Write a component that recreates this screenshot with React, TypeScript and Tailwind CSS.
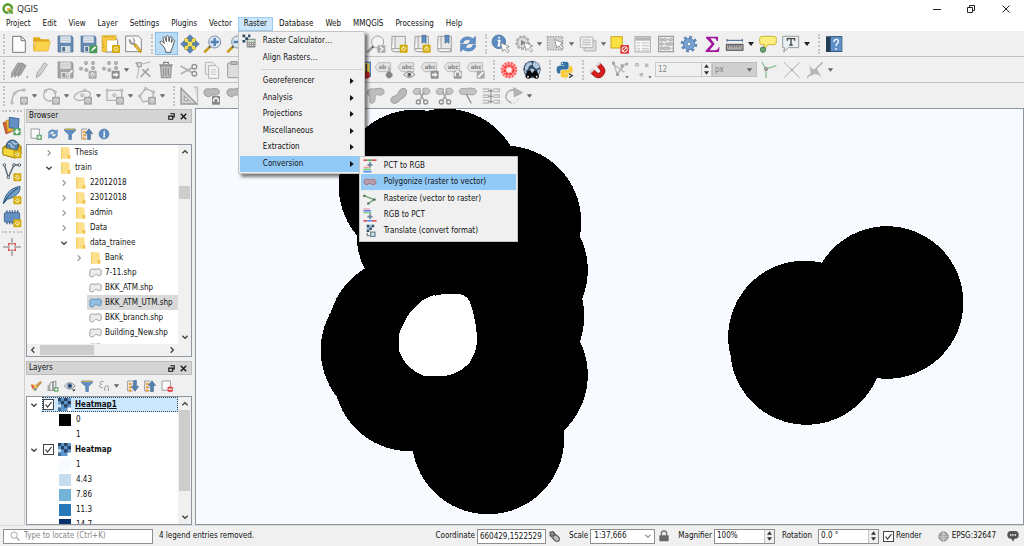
import React from "react";

type Kids = { children?: React.ReactNode };

const Pic = ({ children, size = "size-5" }: Kids & { size?: string }) => (
  <svg viewBox="0 0 60 60" className={`${size} shrink-0`} aria-hidden="true">
    {children}
  </svg>
);

/* ---------- shared badges ---------- */
const Star = ({ x = 32, y = 32, grey = false }: { x?: number; y?: number; grey?: boolean }) => (
  <g transform={`translate(${x} ${y})`}>
    <rect width="24" height="24" rx="3" fill={grey ? "#a9a9a9" : "#d0a90c"} />
    <path d="M12 4v16M4 12h16M6.5 6.5l11 11M17.5 6.5l-11 11" stroke={grey ? "#f2f2f2" : "#fff6bd"} strokeWidth="3" />
    <circle cx="12" cy="12" r="3" fill={grey ? "#a9a9a9" : "#d0a90c"} />
  </g>
);
const ArrowBadge = ({ x = 32, y = 32 }: { x?: number; y?: number }) => (
  <g transform={`translate(${x} ${y})`}>
    <rect width="24" height="24" rx="3" fill="#8f8f8f" />
    <path d="M4 9h8V4l9 8-9 8v-5H4z" fill="#f5f5f5" />
  </g>
);
const Cursor = ({ x = 30, y = 24 }: { x?: number; y?: number }) => (
  <path transform={`translate(${x} ${y})`} d="M0 0l6 26 6-7 9 11 5-4-9-11 9-3z" fill="#fff" stroke="#888" strokeWidth="2.5" />
);

/* ---------- file icons ---------- */
const NewFile = () => (
  <Pic><path d="M11 7h26l12 12v36H11z" fill="#fdfdfd" stroke="#777" strokeWidth="3" /><path d="M36 8v12h12" fill="#e8e8e8" stroke="#777" strokeWidth="3" /></Pic>
);
const OpenFile = () => (
  <Pic><path d="M4 10h18l5 6h24v8H4z" fill="#e0a91a" /><path d="M4 10v38h6" fill="#e0a91a" /><path d="M12 22h43l-7 29H5z" fill="#fbd24c" stroke="#e3b02b" strokeWidth="2" /></Pic>
);
const Floppy = ({ grey = false }: { grey?: boolean }) => (
  <>
    <path d="M9 6h41l4 4v44H9z" fill={grey ? "#a6a6a6" : "#6689b3"} stroke={grey ? "#8a8a8a" : "#4c6c94"} strokeWidth="2" />
    <rect x="16" y="7" width="31" height="19" fill={grey ? "#e2e2e2" : "#e6ecf2"} />
    <path d="M19 13h25M19 19h25" stroke={grey ? "#bbb" : "#a8b6c6"} strokeWidth="2" />
    <rect x="18" y="36" width="28" height="18" fill={grey ? "#dedede" : "#d5dbe2"} />
    <rect x="22" y="39" width="8" height="13" fill={grey ? "#999" : "#52708f"} />
  </>
);
const Save = () => <Pic><Floppy /></Pic>;
const SaveAs = () => (
  <Pic><Floppy /><rect x="34" y="34" width="24" height="24" rx="3" fill="#4c9a57" /><path d="M39 53l3-8 9-8 3 4-9 8z" fill="#fff" /></Pic>
);
const NewLayout = () => (
  <Pic>
    <path d="M12 8h28l10 10v36H12z" fill="#fff" stroke="#888" strokeWidth="3" />
    <path d="M3 5h42v13H17v35H3z" fill="#f7cb45" stroke="#d2a320" strokeWidth="2" />
    <path d="M12 6v6M20 6v6M28 6v6M36 6v6M4 24h6M4 32h6M4 40h6" stroke="#b98b10" strokeWidth="2" />
    <Star x={33} y={33} />
  </Pic>
);
const LayoutManager = () => (
  <Pic>
    <path d="M5 6h38l9 9v38H5z" fill="#fafafa" stroke="#888" strokeWidth="3" />
    <path d="M18 16a10 10 0 0 0 12 13l8 8" fill="none" stroke="#9a9a9a" strokeWidth="7" />
    <path d="M26 12a9 9 0 0 1 4 13" fill="none" stroke="#9a9a9a" strokeWidth="4" />
    <path d="M34 34l15 18" stroke="#c59c17" strokeWidth="9" strokeLinecap="round" /><path d="M35 35l13 16" stroke="#f4da73" strokeWidth="3" />
  </Pic>
);

/* ---------- navigation icons ---------- */
const Hand = () => (
  <Pic><path d="M21 39L10 27c-3-4 2-7 5-5l7 6-4-15c-1-5 5-6 6-2l4 12V8c0-4 6-4 7 0l1 15 3-13c1-4 6-3 6 1l-2 15 3-7c2-4 7-2 6 2l-5 18-5 10v6H26v-6z" fill="#fff" stroke="#444" strokeWidth="2.5" strokeLinejoin="round" /></Pic>
);
const FourArrows = () => (
  <>
    <rect x="14" y="14" width="32" height="32" fill="#f6e052" stroke="#c7a71a" strokeWidth="2" />
    <path d="M30 2l10 11h-6v9h-8v-9h-6zM30 58l10-11h-6v-9h-8v9h-6zM2 30l11-10v6h9v8h-9v6zM58 30L47 20v6h-9v8h9v6z" fill="#5d87b8" stroke="#3f6590" strokeWidth="2" />
  </>
);
const ZoomFull = () => <Pic><FourArrows /></Pic>;
const Lens = ({ plus = true, grey = false }: { plus?: boolean; grey?: boolean }) => (
  <>
    <path d="M22 37L6 53" stroke={grey ? "#a0a0a0" : "#c69c1e"} strokeWidth="8" strokeLinecap="round" />
    <path d="M24 35l-6 6" stroke="#555" strokeWidth="5" />
    <circle cx="35" cy="24" r="18" fill={grey ? "#f4f4f4" : "#dbe7f2"} stroke={grey ? "#a5a5a5" : "#7b8da1"} strokeWidth="3" />
    {!grey && <path d={plus ? "M35 12v24M23 24h24" : "M23 24h24"} stroke="#4f7eb1" strokeWidth="7" />}
  </>
);
const ZoomIn = () => <Pic><Lens /></Pic>;
const ZoomOut = () => <Pic><Lens plus={false} /></Pic>;
const ZoomNext = () => <Pic><Lens grey /><rect x="34" y="34" width="24" height="22" fill="#a9a9a9" /><path d="M42 38l9 7-9 7" fill="none" stroke="#fff" strokeWidth="4" /></Pic>;
const MapSheet = () => (
  <>
    <path d="M9 7h40v46H18c-8 0-10-2-10-8z" fill="#e9e9e9" stroke="#a0a0a0" strokeWidth="3" />
    <path d="M18 8v36H8M18 44h28v9H16" fill="#f7f7f7" stroke="#a0a0a0" strokeWidth="3" />
  </>
);
const NewMapView = () => <Pic><MapSheet /><Star /></Pic>;
const NewBookmark = () => <Pic><MapSheet /><path d="M30 4h12v24l-6-5-6 5z" fill="#5f8cc0" stroke="#3e668f" strokeWidth="2" /><Star /></Pic>;
const Bookmarks = () => <Pic><MapSheet /><path d="M30 4h12v24l-6-5-6 5z" fill="#5f8cc0" stroke="#3e668f" strokeWidth="2" /></Pic>;
const Refresh = ({ size }: { size?: string }) => (
  <Pic size={size}>
    <path d="M7 27C7 9 32 3 45 15l7-8v22H30l8-8C29 13 17 17 15 27z" fill="#5e91c9" stroke="#4777ab" strokeWidth="2" />
    <path d="M53 33C53 51 28 57 15 45l-7 8V31h22l-8 8c9 8 21 4 23-6z" fill="#5e91c9" stroke="#4777ab" strokeWidth="2" />
  </Pic>
);

/* ---------- attribute icons ---------- */
const Info = ({ size, cursor = true }: { size?: string; cursor?: boolean }) => (
  <Pic size={size}>
    <g transform={cursor ? "translate(-3 -3) scale(.88)" : "translate(-2 -2) scale(1.07)"}>
      <circle cx="30" cy="30" r="23" fill="#5b8bc0" stroke="#44719f" strokeWidth="3" />
      <path d="M31 13v6M26 26h7l-4 17h6" stroke="#fff" strokeWidth="6" fill="none" />
    </g>
    {cursor && <Cursor x={29} y={26} />}
  </Pic>
);
const Action = () => (
  <Pic>
    <circle cx="26" cy="26" r="18" fill="#e5e5e5" stroke="#b2b2b2" strokeWidth="8" strokeDasharray="8 4" />
    <circle cx="26" cy="26" r="16" fill="#ddd" stroke="#a5a5a5" strokeWidth="3" /><path d="M21 17l14 9-14 9z" fill="#888" /><Cursor />
  </Pic>
);
const SelectRect = () => (
  <Pic><rect x="4" y="8" width="46" height="40" fill="#d0d0d0" stroke="#888" strokeWidth="3" strokeDasharray="4 4" /><Cursor x={26} y={16} /></Pic>
);
const SelectForm = () => (
  <Pic><rect x="18" y="19" width="36" height="32" rx="3" fill="#ddd" stroke="#b0b0b0" strokeWidth="3" /><rect x="7" y="9" width="38" height="32" rx="3" fill="#f0f0f0" stroke="#b0b0b0" strokeWidth="3" /><path d="M13 18h25M13 25h25M13 32h25" stroke="#b5b5b5" strokeWidth="3" /></Pic>
);
const Deselect = () => (
  <Pic><rect x="3" y="8" width="34" height="34" fill="#fbe241" stroke="#c8a71f" strokeWidth="3" /><rect x="31" y="33" width="26" height="26" rx="3" fill="#de3c3c" /><circle cx="44" cy="46" r="8" fill="none" stroke="#fff" strokeWidth="3" /><path d="M38 52l12-12" stroke="#fff" strokeWidth="3" /></Pic>
);
const TableIcon = () => (
  <Pic><rect x="6" y="8" width="46" height="46" fill="#fafafa" stroke="#aaa" strokeWidth="3" /><path d="M7 15h44" stroke="#b4b4b4" strokeWidth="10" /><path d="M11 27h10M26 27h22M11 35h10M26 35h22M11 43h10M26 43h22M11 49h10M26 49h22" stroke="#c0c0c0" strokeWidth="3" /></Pic>
);
const Abacus = () => (
  <Pic><path d="M8 5v50M52 5v50M5 53h50M8 7h44" stroke="#a0a0a0" strokeWidth="4" /><path d="M8 17h44M8 30h44M8 43h44" stroke="#a8a8a8" strokeWidth="2" /><g fill="#ccc" stroke="#9a9a9a" strokeWidth="2"><circle cx="17" cy="17" r="4.5" /><circle cx="27" cy="17" r="4.5" /><circle cx="43" cy="17" r="4.5" /><circle cx="17" cy="30" r="4.5" /><circle cx="34" cy="30" r="4.5" /><circle cx="44" cy="30" r="4.5" /><circle cx="17" cy="43" r="4.5" /><circle cx="27" cy="43" r="4.5" /><circle cx="37" cy="43" r="4.5" /></g></Pic>
);
const Gear = () => (
  <Pic><circle cx="30" cy="30" r="20" fill="none" stroke="#5f8bbd" strokeWidth="10" strokeDasharray="8 7.7" /><circle cx="30" cy="30" r="17" fill="#79a3d2" stroke="#5682b4" strokeWidth="3" /><circle cx="30" cy="30" r="6" fill="#f2f2f2" stroke="#5682b4" strokeWidth="3" /></Pic>
);
const Sigma = () => (
  <Pic><path d="M12 8h36v13h-4c-1-6-3-8-9-8H25l13 17-15 19h16c6 0 9-3 11-9h3l-3 14H11v-4l18-20L12 12z" fill="#a3119f" /></Pic>
);
const Measure = () => (
  <Pic><path d="M6 19h46M6 15v8M52 15v8" stroke="#3c628f" strokeWidth="3" /><rect x="4" y="31" width="50" height="18" fill="#aaa" stroke="#555" strokeWidth="3" /><path d="M11 32v8M18 32v6M25 32v8M32 32v6M39 32v8M46 32v6" stroke="#444" strokeWidth="2" /></Pic>
);
const MapTip = () => (
  <Pic><path d="M12 7h36q7 0 7 7v11q0 7-7 7H30L19 47V32h-7q-7 0-7-7V14q0-7 7-7z" fill="#fbee7d" stroke="#cdb43a" strokeWidth="3" /><circle cx="15" cy="47" r="8" fill="#68a874" stroke="#447a4e" strokeWidth="3" /></Pic>
);
const Annotation = () => (
  <Pic><path d="M5 7h48v34H22L8 54l3-13H5z" fill="#e9f1f5" stroke="#9a9a9a" strokeWidth="3" /><path d="M19 20v-6h22v6M30 14v19M25 33h10" fill="none" stroke="#444" strokeWidth="4" /></Pic>
);
const Help = () => (
  <Pic><rect x="6" y="7" width="48" height="47" fill="#223f5a" /><rect x="19" y="8" width="35" height="45" fill="#5f90c8" stroke="#36506c" strokeWidth="2" /><path d="M30 24c0-11 14-9 13-1-1 6-7 6-7 13M36 42v5" fill="none" stroke="#fff" strokeWidth="4" /></Pic>
);

/* ---------- editing icons ---------- */
const Pencils = () => (
  <Pic><g fill="#a8a8a8" stroke="#7d7d7d" strokeWidth="2"><path d="M7 52l2-15L27 8l9 5-18 29z" /><path d="M17 52l2-15L36 8l9 5-18 29z" /><path d="M27 50l2-13L43 12l8 5-15 26z" /></g><circle cx="55" cy="51" r="2" fill="#555" /></Pic>
);
const Pencil = () => (
  <Pic><path d="M13 53l2-13L37 8l9 6-22 32z" fill="#d2d2d2" stroke="#a8a8a8" strokeWidth="3" /><path d="M16 40l8 6" stroke="#a0a0a0" strokeWidth="2" /></Pic>
);
const SaveEdits = () => <Pic><Floppy grey /><path d="M32 53l4-12 14-14 6 6-14 14z" fill="#eee" stroke="#888" strokeWidth="2" /></Pic>;
const Dots = ({ arrow = false }: { arrow?: boolean }) => (
  <Pic><g fill="#b5b5b5" stroke="#9a9a9a" strokeWidth="2"><circle cx="9" cy="26" r="5" /><circle cx="24" cy="9" r="5" /><circle cx="45" cy="9" r="5" /><circle cx="25" cy="30" r="5" /><circle cx="45" cy="24" r="5" /></g>{arrow ? <ArrowBadge /> : <Star grey />}</Pic>
);
const Vertex = () => (
  <Pic><path d="M12 55L20 14l32-8" fill="none" stroke="#b0b0b0" strokeWidth="3" /><path d="M8 8l12 12M23 51l24-26M28 28l24 22" stroke="#a5a5a5" strokeWidth="5" /><rect x="13" y="8" width="12" height="12" fill="#ddd" stroke="#999" strokeWidth="3" /></Pic>
);
const Trash = () => (
  <Pic><path d="M14 18h32l-2 35H16z" fill="#c2c2c2" stroke="#888" strokeWidth="3" /><path d="M10 15h40M23 12V7h14v5" fill="none" stroke="#888" strokeWidth="4" /><path d="M23 24v24M30 24v24M37 24v24" stroke="#888" strokeWidth="3" /></Pic>
);
const Scissors = () => (
  <Pic><path d="M5 18l35 20M5 42l35-19" stroke="#b0b0b0" strokeWidth="5" /><circle cx="46" cy="20" r="7" fill="none" stroke="#909090" strokeWidth="4" /><circle cx="46" cy="41" r="7" fill="none" stroke="#909090" strokeWidth="4" /></Pic>
);
const Copy = () => (
  <Pic><path d="M10 7h22l8 8v28H10z" fill="#eee" stroke="#b5b5b5" strokeWidth="3" /><path d="M20 17h22l8 8v30H20z" fill="#f5f5f5" stroke="#b0b0b0" strokeWidth="3" /><path d="M26 29h17M26 36h17M26 43h17" stroke="#c4c4c4" strokeWidth="3" /></Pic>
);
const Paste = () => <Pic><rect x="8" y="9" width="38" height="44" rx="3" fill="#ddd" stroke="#999" strokeWidth="3" /><rect x="18" y="4" width="18" height="10" fill="#bbb" stroke="#888" strokeWidth="2" /></Pic>;
const YellowTag = () => <Pic><rect x="10" y="7" width="48" height="42" fill="#f8d94c" stroke="#4c83c4" strokeWidth="4" /><circle cx="46" cy="45" r="11" fill="#c62828" /><path d="M46 12v24" stroke="#444" strokeWidth="4" /></Pic>;
const Tag = ({ badge, letters = "abc" }: { badge: "pin" | "eye" | "move" | "turn" | "edit"; letters?: string }) => (
  <Pic>
    <path d="M3 22L13 8h37v27H13z" fill="#e3e3e3" stroke="#bdbdbd" strokeWidth="3" />
    <text x="14" y="27" fontSize="18" fontWeight="700" fill="#858585" fontFamily="DejaVu Sans Condensed, sans-serif">{letters}</text>
    {badge === "pin" && <path d="M45 20v18M45 36a9 9 0 1 0 1 0z" fill="#858585" stroke="#858585" strokeWidth="3" />}
    {badge === "eye" && <><path d="M20 44q17-18 34 0-17 17-34 0z" fill="#f0f0f0" stroke="#888" strokeWidth="3" /><circle cx="37" cy="44" r="6" fill="#666" /></>}
    {badge === "move" && <ArrowBadge />}
    {badge === "turn" && <><rect x="32" y="32" width="24" height="24" rx="3" fill="#999" /><path d="M39 49a8 8 0 1 1 10 0" fill="none" stroke="#fff" strokeWidth="4" /></>}
    {badge === "edit" && <><rect x="32" y="32" width="24" height="24" rx="3" fill="#aaa" /><path d="M36 52l16-16" stroke="#fff" strokeWidth="5" /></>}
  </Pic>
);
const RedRing = () => (
  <Pic><circle cx="30" cy="30" r="25" fill="#ffb5b5" /><circle cx="30" cy="30" r="20" fill="none" stroke="#ff6060" strokeWidth="9" strokeDasharray="5 4" /><circle cx="30" cy="30" r="13" fill="none" stroke="#f23a3a" strokeWidth="6" strokeDasharray="9 2" /><circle cx="30" cy="30" r="7" fill="#fff0f0" /></Pic>
);
const GlobeBinoculars = () => (
  <Pic>
    <circle cx="30" cy="28" r="26" fill="#314a66" /><path d="M8 22l7-12 12-5 4 8-10 6-3 9-8 5zM35 5l12 4 7 12-10 6-8-5-4-7zM25 25l12 3-4 12-7-3zM6 30l6 2 2 9-5-2zM46 30l8-3-2 12-6 3z" fill="#b3cade" />
    <path d="M17 33h9l3 5h4l3-5h8l7 16q0 7-8 7-8 0-9-8h-6q-1 8-9 8-8 0-9-7z" fill="#050505" /><circle cx="18" cy="50" r="3" fill="#eee" /><circle cx="44" cy="50" r="3" fill="#eee" />
  </Pic>
);
const pythonHalf =
  "M14.25.18l.9.2.73.26.59.3.45.32.34.34.25.34.16.33.1.3.04.26.02.2-.01.13V8.5l-.05.63-.13.55-.21.46-.26.38-.3.31-.33.25-.35.19-.35.14-.33.1-.3.07-.26.04-.21.02H8.77l-.69.05-.59.14-.5.22-.41.27-.33.32-.27.35-.2.36-.15.37-.1.35-.07.32-.04.27-.02.21v3.06H3.17l-.21-.03-.28-.07-.32-.12-.35-.18-.36-.26-.36-.36-.35-.46-.32-.59-.28-.73-.21-.88-.14-1.05-.05-1.23.06-1.22.16-1.04.24-.87.32-.71.36-.57.4-.44.42-.33.42-.24.4-.16.36-.1.32-.05.24-.01h8.38v-.83H6.18l-.01-2.75-.02-.37.05-.34.11-.31.17-.28.25-.26.31-.23.38-.2.44-.18.51-.15.58-.12.64-.1.71-.06.77-.04.84-.02 1.27.05z";
const Python = () => (
  <Pic>
    <g transform="translate(5 5) scale(2)"><path d={pythonHalf} fill="#3572a5" /><circle cx="8.7" cy="2.9" r="1.1" fill="#fff" /><path d={pythonHalf} fill="#f8cc3a" transform="rotate(180 12 12)" /></g>
    <path d="M42 41l10 6-10 6" fill="none" stroke="#f4f4f4" strokeWidth="9" /><path d="M42 41l10 6-10 6" fill="none" stroke="#444" strokeWidth="4" />
  </Pic>
);
const Magnet = () => (
  <Pic><path d="M11 33l14 12c10 7 25-9 17-19L30 12" fill="none" stroke="#9e1b1b" strokeWidth="15" /><path d="M11 33l14 12c10 7 25-9 17-19L30 12" fill="none" stroke="#d51f1f" strokeWidth="11" /><path d="M6 38l10-11M25 17L36 8" stroke="#d9d9d9" strokeWidth="8" /></Pic>
);
const SnapV = () => <Pic><path d="M7 9l12 34L34 18l15-6M19 43l20-26M10 15l30 22" fill="none" stroke="#b8b8b8" strokeWidth="4" /><g fill="#a5a5a5"><rect x="3" y="5" width="9" height="9" /><rect x="29" y="13" width="9" height="9" /><rect x="43" y="8" width="8" height="8" /><rect x="15" y="39" width="9" height="9" /></g><path d="M43 49h10l-5 6z" fill="#555" /></Pic>;
const SnapDots = () => <Pic><g fill="#ccc" stroke="#aaa" strokeWidth="2"><rect x="5" y="10" width="8" height="8" /><rect x="34" y="12" width="8" height="8" /><rect x="18" y="40" width="8" height="8" /></g><path d="M43 49h10l-5 6z" fill="#555" /></Pic>;
const Topo = () => <Pic><path d="M21 54V27M8 6l13 21 31-10" fill="none" stroke="#8ac295" strokeWidth="4" /><circle cx="21" cy="27" r="5" fill="#aaa" stroke="#777" strokeWidth="2" /></Pic>;
const Cross = () => <Pic><path d="M6 7l47 46M53 7L6 53" stroke="#b0b0b0" strokeWidth="3" /><circle cx="30" cy="30" r="4" fill="#aaa" /></Pic>;
const Trace = () => <Pic><path d="M6 53L53 7" fill="none" stroke="#b0b0b0" strokeWidth="4" /><path d="M13 16l10 12 13-2 9 20-16-4-10 6z" fill="#b8b8b8" /><path d="M40 38l8 12" stroke="#b0b0b0" strokeWidth="3" /></Pic>;

/* ---------- digitizing icons ---------- */
const Shape = ({ kind }: { kind: "arc" | "circle" | "ellipse" | "rect" | "poly" }) => (
  <Pic>
    <g fill="none" stroke="#b2b2b2" strokeWidth="4">
      {kind === "arc" && <path d="M9 50c0-28 12-38 34-38" />}
      {kind === "circle" && <circle cx="26" cy="27" r="18" />}
      {kind === "ellipse" && <ellipse cx="28" cy="29" rx="25" ry="13" transform="rotate(-15 28 29)" />}
      {kind === "rect" && <path d="M6 13h44v30H6z" />}
      {kind === "poly" && <path d="M8 30L26 8l24 10-4 24-28 6z" />}
    </g>
    <g fill="#d5d5d5" stroke="#a0a0a0" strokeWidth="2">
      {kind === "arc" && <><circle cx="9" cy="50" r="4" /><circle cx="45" cy="12" r="4" /><circle cx="17" cy="22" r="4" /></>}
      {kind === "circle" && <><circle cx="13" cy="15" r="4" /><circle cx="42" cy="18" r="4" /></>}
      {kind === "ellipse" && <><circle cx="28" cy="28" r="5" /><circle cx="35" cy="13" r="4" /></>}
      {kind === "rect" && <><circle cx="7" cy="13" r="4" /><circle cx="28" cy="28" r="5" /><circle cx="50" cy="13" r="4" /></>}
      {kind === "poly" && <><circle cx="8" cy="30" r="4" /><circle cx="26" cy="8" r="4" /><circle cx="49" cy="18" r="4" /></>}
    </g>
    <Star grey x={33} />
  </Pic>
);
const SetSquare = () => <Pic><path d="M6 6v48h48z" fill="#d0d0d0" stroke="#989898" strokeWidth="4" /><path d="M16 31v13h14z" fill="#f0f0f0" stroke="#989898" strokeWidth="3" /><path d="M45 3h11v50" fill="#ddd" stroke="#a0a0a0" strokeWidth="2" /></Pic>;
const Blob = ({ badge }: { badge?: boolean }) => (
  <Pic><path d="M6 18c2-14 13-8 22-9 12-3 22-2 24 7 2 10-10 13-18 11-9-2-7 6-15 5S5 26 6 18z" fill="#b9b9b9" stroke="#9a9a9a" strokeWidth="3" />{badge && <g><rect x="30" y="30" width="24" height="26" rx="3" fill="#888" /><path d="M36 47a7 7 0 1 1 11 1" fill="none" stroke="#fff" strokeWidth="4" /></g>}</Pic>
);
const Reshape = () => <Pic><path d="M5 16c5-12 16-5 25-8 16-3 24 0 24 10s-12 11-20 8c-6-1-7 4-7 12s-4 14-11 14c-8-2-3-12-4-20-4-3-9-9-7-16z" fill="#bdbdbd" stroke="#a0a0a0" strokeWidth="3" /></Pic>;
const Offset = () => <Pic><path d="M6 44c-2-14 12-12 18-18 5-6 8-18 19-19 13 0 11 15 6 22-5 8-13 9-19 16-6 8-22 11-24-1z" fill="#bababa" stroke="#9c9c9c" strokeWidth="3" /></Pic>;
const Split = () => <Pic><path d="M4 16c2-11 13-9 21-8v15c-6 3-23 5-21-7zM33 8c10-3 20-1 21 7 0 11-14 13-21 8z" fill="#c4c4c4" stroke="#a5a5a5" strokeWidth="3" /><path d="M22 17l14 26M37 17L23 43" stroke="#a0a0a0" strokeWidth="4" /><circle cx="19" cy="48" r="6" fill="none" stroke="#909090" strokeWidth="4" /><circle cx="41" cy="48" r="6" fill="none" stroke="#909090" strokeWidth="4" /></Pic>;
const Merge = () => <Pic><path d="M4 16c2-11 13-9 21-8 10-3 30-3 30 8 0 12-16 12-24 9-10 0-29 3-27-9z" fill="#c4c4c4" stroke="#a5a5a5" strokeWidth="3" /><path d="M25 24l5 10 10 18" stroke="#909090" strokeWidth="4" fill="none" /></Pic>;
const MergeAttr = () => <Pic><g stroke="#bababa" strokeWidth="4" fill="none"><path d="M5 9h18v8H5M37 9h18v8H37M5 27h18v7H5M37 27h18v7H37M5 43h18v8H5M37 43h18v8H37" /></g><path d="M30 8v44M23 15h14M23 31h14M23 47h14" stroke="#999" strokeWidth="4" /></Pic>;
const Rotate = () => <Pic><path d="M22 50C-4 42 4 10 30 12" fill="none" stroke="#a8a8a8" strokeWidth="4" /><path d="M29 5l27 15-25 12z" fill="#b5b5b5" stroke="#999" strokeWidth="2" /><path d="M20 51c14 4 22-6 24-15" fill="none" stroke="#c4c4c4" strokeWidth="3" strokeDasharray="5 4" /></Pic>;

/* ---------- side toolbar icons ---------- */
const DataSource = () => (
  <Pic><path d="M3 20l26-8 8 31-25 11z" fill="#cc5d37" stroke="#9b4323" strokeWidth="2" /><path d="M12 13l25-3 4 31-24 7z" fill="#f2b63b" stroke="#c4861d" strokeWidth="2" /><path d="M22 4l29 4-2 31-28-4z" fill="#628fc4" stroke="#41699a" strokeWidth="3" /><rect x="34" y="36" width="22" height="22" rx="3" fill="#5aa469" /><path d="M45 40v14M38 47h14" stroke="#fff" strokeWidth="5" /></Pic>
);
const GeoPackage = () => (
  <Pic><path d="M3 25l14-10h33l7 8v22L40 57 3 47z" fill="#e0b314" stroke="#8f7100" strokeWidth="3" /><circle cx="31" cy="21" r="18" fill="#5a82ad" stroke="#314e6d" strokeWidth="3" /><path d="M19 14q9-2 10 8l8 4M30 7l8 8 8-1" stroke="#bcd0e3" strokeWidth="4" fill="none" /><path d="M3 25l36 9v23L3 47z" fill="#f5d83c" stroke="#8f7100" strokeWidth="2" /><Star x={34} y={34} /></Pic>
);
const NewShape = () => <Pic><path d="M7 9l12 37L36 9h14" fill="none" stroke="#54636f" strokeWidth="4" /><g fill="#eee" stroke="#54636f" strokeWidth="3"><circle cx="7" cy="9" r="4" /><circle cx="19" cy="46" r="4" /><circle cx="36" cy="9" r="4" /><circle cx="52" cy="9" r="4" /></g><Star x={34} y={34} /></Pic>;
const Feather = () => <Pic><path d="M4 56C8 31 21 10 54 4c2 15-9 32-38 39z" fill="#6f9bc9" stroke="#3f6691" strokeWidth="3" /><path d="M4 56C14 36 28 22 48 9" stroke="#27486b" strokeWidth="3" fill="none" /><Star x={34} y={34} /></Pic>;
const Memory = () => <Pic><path d="M15 7v42M23 7v42M31 7v42M39 7v42M47 7v30" stroke="#466a92" strokeWidth="4" /><rect x="7" y="14" width="46" height="28" rx="3" fill="#648fc3" stroke="#466a92" strokeWidth="3" /><Star x={34} y={34} /></Pic>;
const Crosshair = () => <Pic><path d="M30 3v21M30 36v21M3 30h21M36 30h21" stroke="#777" strokeWidth="3" /><path d="M20 26v-6h6M34 20h6v6M40 34v6h-6M26 40h-6v-6" fill="none" stroke="#dc5555" strokeWidth="4" /></Pic>;

/* ---------- dock icons ---------- */
const dockSize = "size-3";
const AddSel = () => <Pic size={dockSize}><path d="M5 5h42v46H5z" fill="#fafafa" stroke="#888" strokeWidth="4" /><rect x="33" y="34" width="26" height="25" fill="#5aa469" /><path d="M46 38v17M37 46h18" stroke="#fff" strokeWidth="5" /></Pic>;
const RemoveLayer = () => <Pic size={dockSize}><path d="M5 5h42v46H5z" fill="#fafafa" stroke="#888" strokeWidth="4" /><rect x="33" y="34" width="26" height="25" rx="4" fill="#e03a3a" /><path d="M37 46h18" stroke="#fff" strokeWidth="6" /></Pic>;
const Funnel = () => <Pic size={dockSize}><path d="M3 5h54v9L37 33v25H24V33L3 14z" fill="#5f8fc4" stroke="#41699a" strokeWidth="3" /><path d="M4 7h52" stroke="#c9a94c" strokeWidth="6" /></Pic>;
const TreeArrow = ({ down = false }: { down?: boolean }) => (
  <Pic size={dockSize}><path d="M3 5h28M3 5v50h26M14 20h15M14 37h15" stroke="#8b8b8b" strokeWidth="4" fill="none" /><g fill="#f0a33a"><rect x="9" y="14" width="13" height="11" /><rect x="9" y="31" width="13" height="11" /><rect x="9" y="47" width="13" height="11" /></g><path d={down ? "M33 3h14v29h11L40 56 22 32h11z" : "M33 57h14V28h11L40 4 22 28h11z"} fill="#5580b0" stroke="#385e8b" strokeWidth="3" /></Pic>
);
const Brush = () => <Pic size={dockSize}><path d="M27 29L52 7l6 6-22 25z" fill="#d99a4a" stroke="#9c6a2b" strokeWidth="3" /><path d="M4 23l16-3 18 17-8 18-14-2z" fill="#f2c94c" /><path d="M4 23l13 3 5 15-10 3z" fill="#db5959" /><path d="M17 45l17-6-4 16z" fill="#5789c2" /></Pic>;
const Group = () => <Pic size={dockSize}><path d="M14 50V18L30 6v44M30 50V12l14-7v40M6 50V25M3 52h38" fill="none" stroke="#777" strokeWidth="4" /><rect x="35" y="36" width="22" height="22" fill="#5aa469" /><path d="M46 40v14M39 47h14" stroke="#fff" strokeWidth="5" /></Pic>;
const EyeIcon = () => <Pic size={dockSize}><path d="M2 30q26-34 54 0-28 32-54 0z" fill="#e9eef3" stroke="#777" strokeWidth="4" /><circle cx="29" cy="29" r="13" fill="#5079a6" /><circle cx="29" cy="29" r="5" fill="#111" /><path d="M40 48h18l-9 10z" fill="#222" /></Pic>;
const Expression = () => <Pic size={dockSize}><path d="M28 8C10 2 5 18 18 22 2 24 6 44 25 37M34 55V38q0-9 9-9t9 9v17" fill="none" stroke="#999" strokeWidth="5" /></Pic>;
const Chequer = () => (
  <Pic size="size-[13px]"><rect width="60" height="60" fill="#5f97cf" /><g fill="#27415f"><rect width="14" height="14" /><rect x="28" width="16" height="14" /><rect x="14" y="14" width="14" height="15" /><rect x="44" y="14" width="16" height="15" /><rect x="28" y="29" width="16" height="15" /></g><rect x="44" y="44" width="16" height="16" fill="#fff" /><rect y="29" width="14" height="15" fill="#d3e2f0" /><rect y="44" width="14" height="16" fill="#3f6d9c" /></Pic>
);
const Folder = () => <svg viewBox="0 0 36 36" className="size-3 shrink-0" aria-hidden="true"><path d="M3 1h22l4 4v30H3z" fill="#fde08a" /><path d="M3 1h4v34H3z" fill="#f6cf6b" /><path d="M23 24h8v11h-8z" fill="#f0c24f" /></svg>;
const ShapeFile = ({ on = false }: { on?: boolean }) => (
  <svg viewBox="0 0 39 30" className="h-[10px] w-[13px] shrink-0" aria-hidden="true"><path d="M2 20C4 14 1 9 4 5s10-1 15-1 12-4 16 1 1 9 1 14-7 5-12 1-7 4-12 6-12-1-10-6z" fill={on ? "#93c0e2" : "#ececec"} stroke={on ? "#4e86b3" : "#8d8d8d"} strokeWidth="2.5" /></svg>
);

/* ---------- menu icons ---------- */
const menuPic = "size-[14px]";
const CalcIcon = () => <Pic size={menuPic}><rect x="20" y="20" width="38" height="38" rx="3" fill="#7d8b89" /><path d="M24 25h30v9H24z" fill="#cfe0cf" /><path d="M24 40h30M24 49h30" stroke="#f1d4d4" strokeWidth="5" strokeDasharray="6 3" /><path d="M2 2h12v12H2zM14 14h12v12H14zM26 2h10v12H26zM2 26h12v10H2z" fill="#2d4c66" /></Pic>;
const PctIcon = () => <Pic size={menuPic}><path d="M2 5h16" stroke="#e05050" strokeWidth="7" /><path d="M18 5h20" stroke="#48b35a" strokeWidth="7" /><path d="M38 5h20" stroke="#e05050" strokeWidth="7" /><path d="M30 12v24M19 25h22" stroke="#6c8298" strokeWidth="7" /><path d="M2 36h28" stroke="#e99" strokeWidth="6" /><path d="M2 44h32" stroke="#6fd06f" strokeWidth="6" /><path d="M2 54h34" stroke="#5a8ff0" strokeWidth="8" /></Pic>;
const RgbIcon = () => <Pic size={menuPic}><path d="M2 4h28" stroke="#e99" strokeWidth="5" /><path d="M2 12h32" stroke="#5a6ff0" strokeWidth="6" /><path d="M2 20h34" stroke="#6fd06f" strokeWidth="5" /><path d="M30 24v24M19 37h22" stroke="#6c8298" strokeWidth="7" /><path d="M2 55h16" stroke="#e05050" strokeWidth="7" /><path d="M18 55h20" stroke="#5a8ff0" strokeWidth="7" /><path d="M38 55h20" stroke="#e05050" strokeWidth="7" /></Pic>;
const PolygonizeIcon = () => <Pic size={menuPic}><path d="M3 10v42M13 10v42M23 10v42M33 10v42M43 10v42M53 10v42M2 16h56M2 30h56M2 46h56" stroke="#c9d3e6" strokeWidth="2" /><path d="M5 24c4-12 16-5 25-5s22-6 25 6-3 19-12 17-7-5-15-5-8 8-15 5-11-9-8-18z" fill="#b99cac" stroke="#85697c" strokeWidth="3" /></Pic>;
const RasterizeIcon = () => <Pic size={menuPic}><path d="M4 16l44 17-26 17" fill="none" stroke="#73a873" strokeWidth="6" /><g fill="#546b5b"><rect x="1" y="12" width="9" height="9" /><rect x="42" y="28" width="12" height="9" /><rect x="18" y="45" width="9" height="9" /></g></Pic>;
const TranslateIcon = () => <Pic size={menuPic}><path d="M16 3h11v11H16zM27 14h11v12H27zM38 3h10v11H38zM16 26h11v8H16z" fill="#2f4f6b" /><path d="M27 3h11v11H27zM16 14h11v12H16z" fill="#8db0cc" /><rect x="30" y="32" width="24" height="24" fill="#6f8b9a" /><path d="M36 38h12v12H36z" fill="#dfe9ee" /><path d="M18 38v12h10" fill="none" stroke="#456" strokeWidth="4" /></Pic>;

/* ---------- toolbar parts ---------- */
const Tool = ({ name, active = false, children }: Kids & { name: string; active?: boolean }) => (
  <button
    type="button"
    aria-label={name}
    className={`flex h-[23px] w-[23px] shrink-0 items-center justify-center border ${active ? "border-[#8cc0e8] bg-[#bbdcf5]" : "border-transparent"}`}
  >
    {children}
  </button>
);
const Caret = ({ wide = false, dark = false }: { wide?: boolean; dark?: boolean }) => (
  <svg viewBox="0 0 10 10" className={`h-[10px] shrink-0 ${wide ? "w-[10px]" : "w-[9px]"}`} aria-hidden="true">
    <path d="M2 3h6L5 7z" fill={dark ? "#222" : "#666"} />
  </svg>
);
const Grip = () => <span className="mx-[2px] h-5 w-0 shrink-0 border-l-2 border-dotted border-[#c4c4c4]" />;
const Divider = () => (
  <span className="flex h-full w-[10px] shrink-0 items-center">
    <span className="mx-[2px] h-full w-px bg-[#c6c6c6]" />
    <Grip />
  </span>
);
const Row = ({ children, label, last = false }: Kids & { label: string; last?: boolean }) => (
  <div role="toolbar" aria-label={label} className={`flex shrink-0 items-center overflow-hidden pl-px ${last ? "h-[25px]" : "h-[26px] border-b border-[#c2c2c2]"}`}>
    <Grip />
    {children}
  </div>
);

const Chevron = ({ dir, grey = false }: { dir: "down" | "up" | "left" | "right"; grey?: boolean }) => {
  const d = { down: "M2 4l4 4 4-4", up: "M2 8l4-4 4 4", left: "M8 2L4 6l4 4", right: "M4 2l4 4-4 4" }[dir];
  return (
    <svg viewBox="0 0 12 12" className="size-2 shrink-0" aria-hidden="true">
      <path d={d} fill="none" stroke={grey ? "#a0a0a0" : "#444"} strokeWidth="2" />
    </svg>
  );
};

/* ---------- menus ---------- */
const MenuItem = ({ label, icon, sub = false, on = false, children }: Kids & { label: string; icon?: React.ReactNode; sub?: boolean; on?: boolean }) => (
  <li className={`relative flex min-h-0 flex-1 ${on ? "bg-[#91c9f7]" : ""}`}>
    <button type="button" className="flex w-full items-center pr-[9px] text-left whitespace-nowrap">
      <span className="flex w-[23px] shrink-0 items-center pl-[2px]">{icon}</span>
      <span className="flex-1">{label}</span>
      {sub && <svg viewBox="0 0 6 8" className="h-[6px] w-[5px]" aria-hidden="true"><path d="M1 0l5 4-5 4z" fill="#111" /></svg>}
    </button>
    {children}
  </li>
);

const RasterMenu = () => (
  <ul className="absolute top-full left-0 z-10 flex h-[143px] w-[127px] flex-col border border-[#c4c4c4] bg-[#f0f0f0] p-px shadow-[3px_3px_3px_rgba(0,0,0,0.5)]">
    <MenuItem label="Raster Calculator…" icon={<CalcIcon />} />
    <MenuItem label="Align Rasters…" />
    <li className="flex h-[7px] shrink-0 items-center pl-[21px]"><span className="h-px w-full bg-[#d0d0d0]" /></li>
    <MenuItem label="Georeferencer" sub />
    <MenuItem label="Analysis" sub />
    <MenuItem label="Projections" sub />
    <MenuItem label="Miscellaneous" sub />
    <MenuItem label="Extraction" sub />
    <MenuItem label="Conversion" sub on>
      <ul className="absolute top-0 left-[119px] z-20 flex h-[86px] w-[159px] flex-col border border-[#c4c4c4] bg-[#f0f0f0] p-px">
        <MenuItem label="PCT to RGB" icon={<PctIcon />} />
        <MenuItem label="Polygonize (raster to vector)" icon={<PolygonizeIcon />} on />
        <MenuItem label="Rasterize (vector to raster)" icon={<RasterizeIcon />} />
        <MenuItem label="RGB to PCT" icon={<RgbIcon />} />
        <MenuItem label="Translate (convert format)" icon={<TranslateIcon />} />
      </ul>
    </MenuItem>
  </ul>
);

const MenuBar = () => (
  <nav className="relative z-10 flex h-[14px] shrink-0 bg-white">
    {["Project", "Edit", "View", "Layer", "Settings", "Plugins", "Vector", "Raster", "Database", "Web", "MMQGIS", "Processing", "Help"].map((m) => (
      <div key={m} className="relative flex">
        <button type="button" className={`border px-[5px] ${m === "Raster" ? "border-[#99cdf5] bg-[#cce6fb]" : "border-transparent"}`}>
          {m}
        </button>
        {m === "Raster" && <RasterMenu />}
      </div>
    ))}
  </nav>
);

/* ---------- form parts ---------- */
const Spin = ({ label, value, width, off = false }: { label: string; value: string; width: string; off?: boolean }) => (
  <span className={`flex h-[15px] shrink-0 border ${width} ${off ? "border-[#c9c9c9] bg-[#f0f0f0]" : "border-[#8f8f8f] bg-white"}`}>
    <input id={label} aria-label={label} defaultValue={value} disabled={off} className={`w-0 min-w-0 flex-1 bg-transparent px-[2px] ${off ? "text-[#8a8a8a]" : ""}`} />
    <span className="flex w-[10px] flex-col border-l border-[#c9c9c9] bg-[#efefef]">
      <button type="button" aria-label={`Increase ${label}`} className="flex flex-1 items-center justify-center"><svg viewBox="0 0 6 4" className="h-[4px] w-[5px]"><path d="M0 4l3-4 3 4z" fill="#333" /></svg></button>
      <button type="button" aria-label={`Decrease ${label}`} className="flex flex-1 items-center justify-center"><svg viewBox="0 0 6 4" className="h-[4px] w-[5px]"><path d="M0 0l3 4 3-4z" fill="#333" /></svg></button>
    </span>
  </span>
);
const Check = ({ id, label }: { id: string; label: string }) => (
  <span className="relative flex size-[11px] shrink-0">
    <input id={id} type="checkbox" defaultChecked aria-label={label} className="size-[11px] appearance-none border border-[#444] bg-white" />
    <svg viewBox="0 0 11 11" className="pointer-events-none absolute inset-0" aria-hidden="true"><path d="M2.5 5.5l2 2.5 4-5" fill="none" stroke="#333" strokeWidth="1.2" /></svg>
  </span>
);

/* ---------- docks ---------- */
const DockHead = ({ title }: { title: string }) => (
  <header className="flex h-[14px] shrink-0 items-center border border-[#bcbcbc] bg-[#d4d4d4] pr-[2px] pl-[2px]">
    <h2 className="flex-1">{title}</h2>
    <button type="button" aria-label={`Float ${title}`} className="w-3"><svg viewBox="0 0 9 9" className="mx-auto size-[7px]"><path d="M3 1h5v4H6M1 4h5v4H1z" fill="none" stroke="#111" strokeWidth="1.4" /></svg></button>
    <button type="button" aria-label={`Close ${title}`} className="w-3"><svg viewBox="0 0 9 9" className="mx-auto size-[7px]"><path d="M1 1l7 7M8 1L1 8" stroke="#111" strokeWidth="1.6" /></svg></button>
  </header>
);
const DockTool = ({ name, children }: Kids & { name: string }) => (
  <button type="button" aria-label={name} className="flex h-full w-[17px] shrink-0 items-center justify-center">{children}</button>
);

const folders: { name: string; pad: string; open?: boolean }[] = [
  { name: "Thesis", pad: "pl-4" },
  { name: "train", pad: "pl-4", open: true },
  { name: "22012018", pad: "pl-[31px]" },
  { name: "23012018", pad: "pl-[31px]" },
  { name: "admin", pad: "pl-[31px]" },
  { name: "Data", pad: "pl-[31px]" },
  { name: "data_trainee", pad: "pl-[31px]", open: true },
  { name: "Bank", pad: "pl-[46px]" },
];
const files = ["7-11.shp", "BKK_ATM.shp", "BKK_ATM_UTM.shp", "BKK_branch.shp", "Building_New.shp"];

const Browser = () => (
  <section className="flex h-[248px] shrink-0 flex-col">
    <DockHead title="Browser" />
    <div className="flex h-[21px] shrink-0 items-center pl-px">
      <DockTool name="Add layers"><AddSel /></DockTool>
      <DockTool name="Refresh"><Refresh size={dockSize} /></DockTool>
      <DockTool name="Filter"><Funnel /></DockTool>
      <DockTool name="Collapse all"><TreeArrow /></DockTool>
      <DockTool name="Properties"><Info size={dockSize} cursor={false} /></DockTool>
    </div>
    <div className="flex min-h-0 flex-1 flex-col border border-[#8c96a0] bg-white">
      <div className="flex min-h-0 flex-1">
        <ul className="min-w-0 flex-1 overflow-hidden">
          {folders.map((f) => (
            <li key={f.name} className={`flex h-[15px] items-center ${f.pad}`}>
              <span className="flex w-[17px] shrink-0 pl-[2px]"><Chevron dir={f.open ? "down" : "right"} grey={!f.open} /></span>
              <Folder />
              <span className="pl-[3px] whitespace-nowrap">{f.name}</span>
            </li>
          ))}
          {files.map((f) => (
            <li key={f} className={`ml-[60px] flex h-[15px] items-center gap-[3px] pl-[2px] ${f.includes("UTM") ? "bg-[#d9d9d9]" : ""}`}>
              <ShapeFile on={f.includes("UTM")} />
              <span className="whitespace-nowrap">{f}</span>
            </li>
          ))}
          <li className="ml-[60px] flex h-[15px] items-center pl-[2px]"><ShapeFile /></li>
        </ul>
        <div className="flex w-[13px] shrink-0 flex-col items-center bg-[#f0f0f0] py-[3px]">
          <Chevron dir="up" />
          <span className="mt-[30px] h-[13px] w-[11px] bg-[#cdcdcd]" />
          <span className="flex-1" />
          <Chevron dir="down" />
        </div>
      </div>
      <div className="flex h-[12px] shrink-0 items-center bg-[#f0f0f0] pr-[15px] pl-[2px]">
        <Chevron dir="left" />
        <span className="ml-[3px] h-[10px] w-[54px] bg-[#cdcdcd]" />
        <span className="flex-1" />
        <Chevron dir="right" />
      </div>
    </div>
  </section>
);

const Raster = ({ id, name, on = false }: { id: string; name: string; on?: boolean }) => (
  <li className="flex h-[15px] items-center">
    <span className="flex w-[15px] shrink-0 pl-[3px]"><Chevron dir="down" /></span>
    <span className={`flex h-full flex-1 items-center border ${on ? "border-dotted border-[#345] bg-[#cce8ff]" : "border-transparent"}`}>
      <span className="flex w-[15px]"><Check id={id} label={`Show ${name}`} /></span>
      <Chequer />
      <label htmlFor={id} className={`pl-1 font-bold ${on ? "underline" : ""}`}>{name}</label>
    </span>
  </li>
);
const Legend = ({ color, text }: { color: string; text: string }) => (
  <li className="flex h-[15px] items-center pl-8"><span className={`h-3 w-3 ${color}`} /><span className="pl-[5px]">{text}</span></li>
);

const Layers = () => (
  <section className="flex min-h-0 flex-1 flex-col">
    <DockHead title="Layers" />
    <div className="flex h-[21px] shrink-0 items-center pl-px">
      <DockTool name="Styling"><Brush /></DockTool>
      <DockTool name="Add group"><Group /></DockTool>
      <DockTool name="Visibility"><EyeIcon /></DockTool>
      <DockTool name="Filter legend"><Funnel /></DockTool>
      <DockTool name="Filter by expression"><Expression /></DockTool>
      <Caret />
      <span className="w-[3px]" />
      <DockTool name="Expand all"><TreeArrow down /></DockTool>
      <DockTool name="Collapse all"><TreeArrow /></DockTool>
      <DockTool name="Remove layer"><RemoveLayer /></DockTool>
    </div>
    <div className="flex min-h-0 flex-1 border border-[#8c96a0] bg-white">
      <ul className="min-w-0 flex-1 overflow-hidden">
        <Raster id="layer-1" name="Heatmap1" on />
        <Legend color="bg-black" text="0" />
        <Legend color="bg-white" text="1" />
        <Raster id="layer-2" name="Heatmap" />
        <Legend color="bg-[#f7fbff]" text="1" />
        <Legend color="bg-[#c8dcf0]" text="4.43" />
        <Legend color="bg-[#73b3d8]" text="7.86" />
        <Legend color="bg-[#2879b9]" text="11.3" />
        <Legend color="bg-[#08306b]" text="14.7" />
      </ul>
      <div className="flex w-[13px] shrink-0 flex-col items-center bg-[#f0f0f0] py-[3px]">
        <Chevron dir="up" />
        <span className="mt-[2px] h-[81px] w-[11px] bg-[#cdcdcd]" />
        <span className="flex-1" />
        <Chevron dir="down" />
      </div>
    </div>
  </section>
);

/* ---------- map canvas ---------- */
const discs: [number, number][] = [
  [488, 438], [511.5, 375], [508, 316], [511.5, 270], [505, 222], [445, 185], [415, 186],
  [433, 235], [404, 334], [397, 350], [410, 375], [887, 302.5], [804.5, 337], [806.5, 348.5],
];
const MapCanvas = () => (
  <main className="min-w-0 flex-1 border border-[#8c96a0] bg-[#f7fbff]">
    <svg className="block h-full w-full" shapeRendering="crispEdges" role="img" aria-label="Heatmap raster">
      <g transform="translate(-196 -109)">
        {discs.map(([x, y]) => <circle key={`${x}-${y}`} cx={x} cy={y} r="76.3" />)}
        <path d="M435 295.700Q441 294 448 294h9q9 0 13 8 3 8 4 14 3 15 3 23 0 12-7 23-6 7-13 10-8 4-17 4.500-10 0-17-1-8-3-15-10-6-6-9-15-1-8 0-16 4-12 11-22 6-7 12-12 7-4 13-5.800z" fill="#fff" />
      </g>
    </svg>
  </main>
);

/* ---------- status bar ---------- */
const StatusBar = () => (
  <footer className="flex h-[21px] shrink-0 items-center border-t border-[#d9d9d9] bg-[#f0f0f0] pr-[5px] pl-[3px]">
    <label className="flex h-[15px] w-[150px] shrink-0 items-center border border-[#8f8f8f] bg-white pl-[6px]">
      <svg viewBox="0 0 12 12" className="size-[10px] shrink-0" aria-hidden="true"><circle cx="5" cy="5" r="3.8" fill="none" stroke="#999" /><path d="M8 8l3.5 3.5" stroke="#999" strokeWidth="1.3" /></svg>
      <input aria-label="Locate" placeholder="Type to locate (Ctrl+K)" className="w-0 min-w-0 flex-1 bg-transparent pl-[4px] placeholder:text-[#858585]" />
    </label>
    <span className="ml-[6px] whitespace-nowrap">4 legend entries removed.</span>
    <div className="ml-auto flex shrink-0 items-center">
      <label htmlFor="coord" className="pr-[2px]">Coordinate</label>
      <input id="coord" defaultValue="660429,1522529" className="h-[15px] w-[69px] border border-[#8f8f8f] bg-white px-[2px]" />
      <button type="button" aria-label="Toggle extents" className="mr-2 ml-[2px] w-[13px]">
        <Pic size="size-[13px]"><path d="M7 9l45 42M7 24l28 28M20 8l34 30" stroke="#777" strokeWidth="5" /><circle cx="20" cy="18" r="11" fill="#888" stroke="#444" strokeWidth="4" /><ellipse cx="38" cy="38" rx="17" ry="12" transform="rotate(45 38 38)" fill="#bbb" stroke="#444" strokeWidth="4" /></Pic>
      </button>
      <label htmlFor="scale" className="pr-[2px]">Scale</label>
      <span className="relative flex h-[15px] w-[65px] items-center border border-[#8f8f8f] bg-white">
        <select id="scale" defaultValue="1:37,666" className="w-full appearance-none bg-transparent pl-[3px]"><option>1:37,666</option></select>
        <span className="pointer-events-none absolute right-[2px]"><Chevron dir="down" grey /></span>
      </span>
      <svg viewBox="0 0 30 36" className="mx-[4px] h-3 w-[10px]" aria-hidden="true"><path d="M7 17V10q0-7 8-7t8 7v7" fill="none" stroke="#777" strokeWidth="4" /><rect x="1" y="16" width="28" height="18" rx="2" fill="#666" /></svg>
      <label htmlFor="Magnifier" className="pr-[2px] pl-[5px]">Magnifier</label>
      <Spin label="Magnifier" value="100%" width="w-[61px]" />
      <label htmlFor="Rotation" className="pr-[6px] pl-[7px]">Rotation</label>
      <Spin label="Rotation" value="0.0 °" width="w-[61px]" />
      <span className="ml-[4px] flex items-center gap-[2px]"><Check id="render" label="Render" /><label htmlFor="render">Render</label></span>
      <button type="button" className="ml-[16px] flex items-center gap-[3px]">
        <svg viewBox="0 0 12 12" className="size-[11px]" aria-hidden="true"><circle cx="6" cy="6" r="5" fill="#999" stroke="#777" /><path d="M1 6h10M6 1v10M2 3.5h8M2 8.5h8M6 1q-4 5 0 10M6 1q4 5 0 10" fill="none" stroke="#ddd" strokeWidth=".6" /></svg>
        EPSG:32647
      </button>
      <button type="button" aria-label="Messages" className="ml-[11px]">
        <svg viewBox="0 0 36 36" className="size-3" aria-hidden="true"><rect x="1" y="3" width="34" height="23" rx="11" fill="#555" /><path d="M12 24h12l-6 11z" fill="#555" /><path d="M9 15h4M16 15h4M23 15h4" stroke="#fff" strokeWidth="4" /></svg>
      </button>
    </div>
  </footer>
);

export default function App() {
  return (
    <div className="flex h-screen flex-col overflow-hidden bg-[#f0f0f0] font-['DejaVu_Sans_Condensed','DejaVu_Sans',sans-serif] text-[8px] leading-3 text-[#111]">
      <header className="flex h-[17px] shrink-0 items-center bg-white pl-[2px]">
        <Pic size="size-[12px]"><circle cx="29" cy="28" r="21" fill="none" stroke="#5f9e35" strokeWidth="13" /><path d="M30 27l25 5-8 6 11 11-9 9-11-12-5 8z" fill="#5f9e35" stroke="#fff" strokeWidth="2" /><path d="M25 24l18 3-15 15z" fill="#f0a92c" /></Pic>
        <h1 className="flex-1 pl-[3px] font-['Open_Sans',sans-serif] text-[9px] leading-[14px]">QGIS</h1>
        <div className="flex items-center">
          <button type="button" aria-label="Minimize" className="w-[34px]"><svg viewBox="0 0 10 10" className="mx-auto size-[10px]"><path d="M1 5.5h8" stroke="#222" /></svg></button>
          <button type="button" aria-label="Restore" className="w-[34px]"><svg viewBox="0 0 10 10" className="mx-auto size-[10px]"><path d="M3.5 3V1.5h5v5H7M1.5 3.5h5v5h-5z" fill="none" stroke="#222" /></svg></button>
          <button type="button" aria-label="Close" className="w-[36px]"><svg viewBox="0 0 10 10" className="mx-auto size-[10px]"><path d="M1.5 1.5l7 7M8.5 1.5l-7 7" stroke="#222" /></svg></button>
        </div>
      </header>
      <MenuBar />

      <Row label="Project and navigation">
        <Tool name="New"><NewFile /></Tool>
        <Tool name="Open"><OpenFile /></Tool>
        <Tool name="Save"><Save /></Tool>
        <Tool name="Save as"><SaveAs /></Tool>
        <Tool name="New layout"><NewLayout /></Tool>
        <Tool name="Layout manager"><LayoutManager /></Tool>
        <Divider />
        <Tool name="Pan" active><Hand /></Tool>
        <Tool name="Pan to selection"><ZoomFull /></Tool>
        <Tool name="Zoom in"><ZoomIn /></Tool>
        <Tool name="Zoom out"><ZoomOut /></Tool>
        <Tool name="Native zoom"><ZoomOut /></Tool>
        <Tool name="Zoom full"><ZoomFull /></Tool>
        <Tool name="Zoom to selection"><ZoomIn /></Tool>
        <Tool name="Zoom to layer"><ZoomIn /></Tool>
        <Tool name="Zoom last"><ZoomNext /></Tool>
        <span className="w-[2px] shrink-0" />
        <Tool name="Zoom next"><ZoomNext /></Tool>
        <Tool name="New map view"><NewMapView /></Tool>
        <Tool name="New bookmark"><NewBookmark /></Tool>
        <Tool name="Show bookmarks"><Bookmarks /></Tool>
        <Tool name="Refresh"><Refresh /></Tool>
        <Divider />
        <Tool name="Identify"><Info /></Tool>
        <Tool name="Run action"><Action /></Tool><Caret />
        <Tool name="Select features"><SelectRect /></Tool><Caret />
        <Tool name="Select by value"><SelectForm /></Tool><Caret />
        <Tool name="Deselect"><Deselect /></Tool>
        <Tool name="Attribute table"><TableIcon /></Tool>
        <Tool name="Field calculator"><Abacus /></Tool>
        <Tool name="Toolbox"><Gear /></Tool>
        <Tool name="Statistics"><Sigma /></Tool>
        <Tool name="Measure"><Measure /></Tool><Caret wide dark />
        <Tool name="Map tips"><MapTip /></Tool>
        <Tool name="Text annotation"><Annotation /></Tool><Caret wide dark />
        <Divider />
        <Tool name="Help"><Help /></Tool>
      </Row>

      <Row label="Editing">
        <Tool name="Current edits"><Pencils /></Tool>
        <Tool name="Toggle editing"><Pencil /></Tool>
        <Tool name="Save edits"><SaveEdits /></Tool>
        <Tool name="Add point"><Dots /></Tool>
        <Tool name="Move feature"><Dots arrow /></Tool><Caret />
        <Tool name="Vertex tool"><Vertex /></Tool>
        <Tool name="Delete"><Trash /></Tool>
        <Tool name="Cut"><Scissors /></Tool>
        <Tool name="Copy"><Copy /></Tool>
        <Tool name="Paste"><Paste /></Tool>
        <Tool name="Undo"><Paste /></Tool>
        <Divider />
        <Tool name="Labels"><YellowTag /></Tool>
        <Tool name="Diagrams"><YellowTag /></Tool>
        <Tool name="Label options"><YellowTag /></Tool>
        <span className="w-px shrink-0" />
        <Tool name="Highlight labels"><YellowTag /></Tool>
        <Tool name="Pin labels"><Tag badge="pin" letters="ab" /></Tool>
        <Tool name="Show labels"><Tag badge="eye" /></Tool>
        <Tool name="Move label"><Tag badge="move" /></Tool>
        <Tool name="Rotate label"><Tag badge="turn" /></Tool>
        <Tool name="Change label"><Tag badge="edit" /></Tool>
        <Divider />
        <Tool name="Red layer"><RedRing /></Tool>
        <Tool name="Search"><GlobeBinoculars /></Tool>
        <Divider />
        <Tool name="Python console"><Python /></Tool>
        <Divider />
        <Tool name="Snapping"><Magnet /></Tool>
        <Tool name="Snap layers"><SnapV /></Tool>
        <Tool name="Snap type"><SnapDots /></Tool>
        <Spin label="Tolerance" value="12" width="w-[57px]" off />
        <span className="relative flex h-[15px] w-[45px] shrink-0 items-center border border-[#bdbdbd] bg-[#cfcfcf]">
          <select aria-label="Unit" disabled defaultValue="px" className="w-full appearance-none bg-transparent pl-[2px] text-[#808080]"><option>px</option></select>
          <span className="pointer-events-none absolute right-[2px]"><Caret /></span>
        </span>
        <Tool name="Topological editing"><Topo /></Tool>
        <Tool name="Snap on intersection"><Cross /></Tool>
        <Tool name="Tracing"><Trace /></Tool><Caret />
      </Row>

      <Row label="Digitizing" last>
        <Tool name="Add arc"><Shape kind="arc" /></Tool><Caret />
        <Tool name="Add circle"><Shape kind="circle" /></Tool><Caret />
        <Tool name="Add ellipse"><Shape kind="ellipse" /></Tool><Caret />
        <Tool name="Add rectangle"><Shape kind="rect" /></Tool><Caret />
        <Tool name="Add polygon"><Shape kind="poly" /></Tool><Caret />
        <Divider />
        <Tool name="Advanced digitizing"><SetSquare /></Tool>
        <Tool name="Rotate feature"><Blob badge /></Tool>
        <Tool name="Simplify"><Blob /></Tool>
        <Tool name="Add ring"><Blob /></Tool>
        <Tool name="Add part"><Blob /></Tool>
        <Tool name="Fill ring"><Blob /></Tool>
        <Tool name="Delete ring"><Blob /></Tool>
        <Tool name="Delete part"><Blob /></Tool>
        <span className="w-[3px] shrink-0" />
        <Tool name="Reshape"><Reshape /></Tool>
        <Tool name="Offset curve"><Offset /></Tool>
        <Tool name="Split features"><Split /></Tool>
        <Tool name="Split parts"><Split /></Tool>
        <Tool name="Merge features"><Merge /></Tool>
        <Tool name="Merge attributes"><MergeAttr /></Tool>
        <Tool name="Rotate symbols"><Rotate /></Tool><Caret />
      </Row>

      <div className="flex min-h-0 flex-1">
        <div role="toolbar" aria-label="Layers" className="flex w-[25px] shrink-0 flex-col items-center border-r border-[#cfcfcf]">
          <span className="my-[2px] w-5 border-t-2 border-dotted border-[#c4c4c4]" />
          <Tool name="Data source manager"><DataSource /></Tool>
          <Tool name="New GeoPackage"><GeoPackage /></Tool>
          <Tool name="New shapefile"><NewShape /></Tool>
          <Tool name="New SpatiaLite layer"><Feather /></Tool>
          <Tool name="New memory layer"><Memory /></Tool>
          <span className="my-[2px] w-5 border-t-2 border-dotted border-[#c4c4c4]" />
          <Tool name="Coordinate capture"><Crosshair /></Tool>
        </div>
        <div className="flex w-[167px] shrink-0 flex-col gap-1 pt-px pl-px">
          <Browser />
          <Layers />
        </div>
        <div className="w-[3px] shrink-0" />
        <MapCanvas />
      </div>
      <StatusBar />
    </div>
  );
}
